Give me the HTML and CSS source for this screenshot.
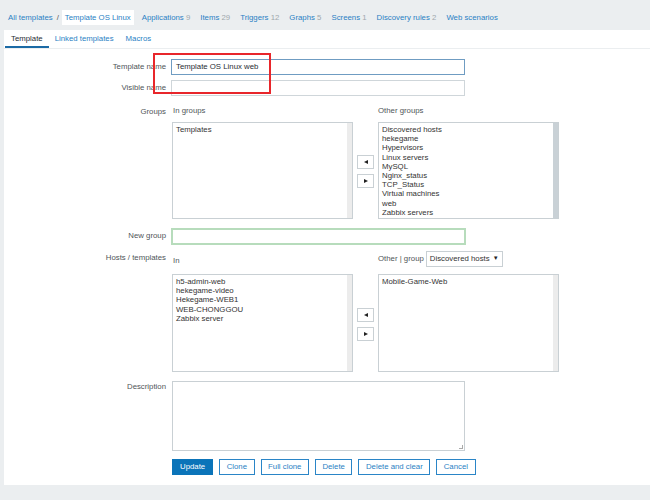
FILE: index.html
```html
<!DOCTYPE html>
<html>
<head>
<meta charset="utf-8">
<link rel="stylesheet" href="styles.css">
</head>
<body>
<div class="header">
  <a class="crumb">All templates</a>
  <span class="sep">/</span>
  <a class="crumb current">Template OS Linux</a>
  <a class="crumb nav">Applications <span class="cnt">9</span></a>
  <a class="crumb nav">Items <span class="cnt">29</span></a>
  <a class="crumb nav">Triggers <span class="cnt">12</span></a>
  <a class="crumb nav">Graphs <span class="cnt">5</span></a>
  <a class="crumb nav">Screens <span class="cnt">1</span></a>
  <a class="crumb nav">Discovery rules <span class="cnt">2</span></a>
  <a class="crumb nav">Web scenarios</a>
</div>
<div class="panel">
  <div class="tabs">
    <div class="tab active">Template</div>
    <div class="tab">Linked templates</div>
    <div class="tab">Macros</div>
  </div>
  <div class="form">
    <div class="label mid">Template name</div>
    <div class="field"><div class="input focus">Template OS Linux web</div></div>

    <div class="label mid">Visible name</div>
    <div class="field"><div class="input"></div></div>

    <div class="label top gl">Groups</div>
    <div class="field twin gf">
      <div class="twin-head"><span class="h-left">In groups</span><span class="h-right">Other groups</span></div>
      <div class="twin-body groups">
        <div class="list"><div class="items">Templates</div><div class="track"></div></div>
        <div class="arrows">
          <div class="abtn"><span class="tri-l"></span></div>
          <div class="abtn"><span class="tri-r"></span></div>
        </div>
        <div class="list"><div class="items">Discovered hosts<br>hekegame<br>Hypervisors<br>Linux servers<br>MySQL<br>Nginx_status<br>TCP_Status<br>Virtual machines<br>web<br>Zabbix servers</div><div class="track dark"></div></div>
      </div>
    </div>

    <div class="label mid ng">New group</div>
    <div class="field ng"><div class="input green"></div></div>

    <div class="label top ht">Hosts / templates</div>
    <div class="field twin hf">
      <div class="twin-head hosts-head"><span class="h-left in">In</span><span class="h-right other">Other | group <span class="select">Discovered hosts <span class="caret">▼</span></span></span></div>
      <div class="twin-body hosts">
        <div class="list"><div class="items">h5-admin-web<br>hekegame-video<br>Hekegame-WEB1<br>WEB-CHONGGOU<br>Zabbix server</div><div class="track"></div></div>
        <div class="arrows">
          <div class="abtn"><span class="tri-l"></span></div>
          <div class="abtn"><span class="tri-r"></span></div>
        </div>
        <div class="list"><div class="items">Mobile-Game-Web</div><div class="track"></div></div>
      </div>
    </div>

    <div class="label top desc-l">Description</div>
    <div class="field desc-f"><div class="textarea"><span class="grip"></span></div></div>

    <div class="label"></div>
    <div class="field buttons">
      <div class="btn primary">Update</div>
      <div class="btn">Clone</div>
      <div class="btn">Full clone</div>
      <div class="btn">Delete</div>
      <div class="btn">Delete and clear</div>
      <div class="btn">Cancel</div>
    </div>
  </div>
</div>
<div class="highlight"></div>
</body>
</html>
```
FILE: styles.css
```css
* { box-sizing: border-box; }
html, body { margin: 0; padding: 0; }
body {
  background: #ebeef0;
  font-family: "Liberation Sans", Arial, sans-serif;
  font-size: 7.8px;
  line-height: 9.2px;
  color: #1f2c33;
  width: 650px;
  height: 500px;
  overflow: hidden;
  position: relative;
}
.header {
  height: 30px;
  display: flex;
  align-items: center;
  padding-left: 8px;
  padding-top: 5px;
}
.crumb { color: #2a7fc4; text-decoration: none; }
.sep { color: #555; margin: 0 3px 0 4px; }
.crumb.current {
  background: #fff;
  padding: 3px 3px;
  margin-right: 8px;
}
.crumb.nav { margin-right: 10px; }
.cnt { color: #a0a8ad; }
.panel {
  margin-left: 4px;
  background: #fff;
  height: 455px;
}
.tabs {
  display: flex;
  height: 19px;
  border-bottom: 1px solid #ebeef0;
  padding-left: 1px;
}
.tab {
  padding: 0 6px;
  line-height: 17px;
  color: #2a7fc4;
  border-bottom: 2px solid transparent;
}
.tab.active { color: #1f2c33; border-bottom-color: #1b6aa5; }
.form {
  display: grid;
  grid-template-columns: 162px 1fr;
  column-gap: 5px;
  row-gap: 5px;
  padding-top: 10px;
}
.label { text-align: right; color: #4f5558; }
.label.mid { line-height: 16px; }
.label.top { padding-top: 1px; }
.input {
  width: 294px;
  height: 16px;
  border: 1px solid #cfd6da;
  padding: 0 4px;
  line-height: 14px;
  color: #1f2c33;
}
.input.focus { border-color: #6f9cc2; }
.input.green { border: 2px solid #b7dcbc; width: 295px; height: 17px; }
.gl, .gf { margin-top: 5px; }
.field.ng, .label.ng { margin-top: 4px; }
.twin { padding-left: 1px; }
.twin-head { height: 16px; display: flex; }
.h-left { width: 206px; padding-left: 1px; color: #4f5558; }
.h-right { color: #4f5558; }
.twin-body { display: flex; }
.list {
  width: 181px;
  height: 97px;
  border: 1px solid #c9d0d4;
  display: flex;
}
.hosts .list { height: 98px; }
.items { flex: 1; padding: 2px 3px; color: #333; }
.track { width: 5px; background: #ececec; }
.track.dark { background: #c9d1d6; }
.arrows {
  display: flex;
  flex-direction: column;
  gap: 5px;
  justify-content: center;
  width: 25px;
  align-items: center;
  padding-top: 2px;
}
.abtn {
  width: 17px;
  height: 14px;
  border: 1px solid #c9d0d4;
  background: #fff;
  display: flex;
  align-items: center;
  justify-content: center;
}
.tri-l { width: 0; height: 0; border-top: 2.5px solid transparent; border-bottom: 2.5px solid transparent; border-right: 4px solid #222; }
.tri-r { width: 0; height: 0; border-top: 2.5px solid transparent; border-bottom: 2.5px solid transparent; border-left: 4px solid #222; }
.hf, .ht { margin-top: 1px; }
.hosts-head { height: 23px; align-items: flex-start; }
.hosts-head .in { padding-top: 5px; }
.hosts-head .other { display: flex; align-items: center; height: 16px; }
.label.ht { padding-top: 2px; }
.select {
  display: inline-flex;
  align-items: center;
  height: 16px;
  border: 1px solid #c9d0d4;
  padding: 0 3px;
  margin-left: 2px;
  width: 77px;
  justify-content: space-between;
  color: #333;
}
.caret { font-size: 6px; color: #222; }
.desc-l, .desc-f { margin-top: 4px; }
.desc-l { padding-top: 4px; }
.textarea {
  width: 293px;
  height: 70px;
  border: 1px solid #c9d0d4;
  margin-left: 1px;
  position: relative;
}
.grip {
  position: absolute;
  right: 1px;
  bottom: 1px;
  width: 4px;
  height: 4px;
  border-right: 1px solid #aaa;
  border-bottom: 1px solid #aaa;
}
.buttons { display: flex; gap: 6px; padding-left: 1px; margin-top: 3px; }
.btn {
  height: 16px;
  line-height: 14px;
  border: 1px solid #2a85c7;
  color: #2a7fc4;
  padding: 0 6.5px;
  background: #fff;
}
.btn.primary { background: #0b74b9; color: #fff; border-color: #0b74b9; padding: 0 7px; }
.highlight {
  position: absolute;
  left: 153px;
  top: 53px;
  width: 118px;
  height: 41px;
  border: 2px solid #e8262b;
}
```
